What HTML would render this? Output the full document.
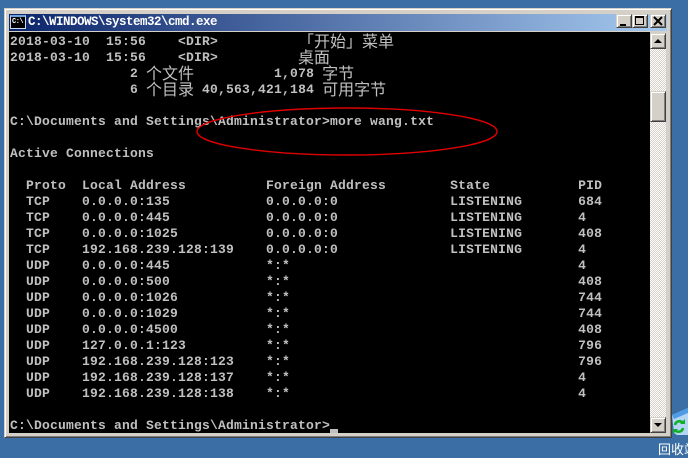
<!DOCTYPE html>
<html><head><meta charset="utf-8">
<style>
html,body{margin:0;padding:0;width:688px;height:455px;overflow:hidden;background:#3a6ea5}
div{position:absolute;box-sizing:border-box}
#win{left:4px;top:8px;width:668px;height:430px;background:#d4d0c8;border:1px solid #d4d0c8;border-right-color:#404040;border-bottom-color:#404040;box-shadow:inset 1px 1px 0 #fff,inset -1px -1px 0 #808080}
#tb{left:9px;top:14px;width:658px;height:17px;background:linear-gradient(90deg,#0a246a,#a6caf0)}
#tt{left:28px;top:14px;font:bold 12.5px/17px "Liberation Mono",monospace;color:#fff;letter-spacing:-.5px;white-space:pre}
#con{left:9px;top:32px;width:641px;height:401px;background:#000;overflow:hidden}
.r{left:1px;height:16px;white-space:pre;font:bold 13px/16px "Liberation Mono",monospace;letter-spacing:.2px;color:#c0c0c0}
.c{font:normal 16px/0 "WenQuanYi Zen Hei","Noto Sans CJK SC",sans-serif;letter-spacing:0;color:#c0c0c0;position:relative;top:1.5px}
.btn{background:#d4d0c8;border:1px solid #d4d0c8;border-right-color:#404040;border-bottom-color:#404040;box-shadow:inset 1px 1px 0 #fff,inset -1px -1px 0 #808080}
#label{left:658px;top:442px;font:13px/14px "WenQuanYi Zen Hei","Noto Sans CJK SC",sans-serif;color:#fff;white-space:pre}
</style></head>
<body>
<div id="win"></div>
<div id="tb"></div>
<div style="left:10px;top:15px;width:16px;height:14px;background:#000;border:1px solid #c8d8f0;border-top:2px solid #6ea0e0"></div>
<div style="left:12px;top:18px;font:bold 7px/8px 'Liberation Mono',monospace;color:#fff;letter-spacing:-.5px;white-space:pre">C:\</div>
<div id="tt">C:\WINDOWS\system32\cmd.exe</div>

<div class="btn" style="left:616px;top:14px;width:16px;height:14px"></div>
<div style="left:620px;top:24px;width:6px;height:2px;background:#000"></div>
<div class="btn" style="left:632px;top:14px;width:16px;height:14px"></div>
<div style="left:635px;top:16px;width:9px;height:9px;border:1px solid #000;border-top-width:2px"></div>
<div class="btn" style="left:650px;top:14px;width:16px;height:14px"></div>
<svg style="position:absolute;left:650px;top:14px" width="16" height="14"><path d="M4 3L12 11M12 3L4 11" stroke="#000" stroke-width="2" fill="none"/></svg>

<div id="con">
<div class="r" style="top:2px">2018-03-10  15:56    &lt;DIR&gt;          <span class="c">「开始」菜单</span></div>
<div class="r" style="top:18px">2018-03-10  15:56    &lt;DIR&gt;          <span class="c">桌面</span></div>
<div class="r" style="top:34px">               2 <span class="c">个文件</span>          1,078 <span class="c">字节</span></div>
<div class="r" style="top:50px">               6 <span class="c">个目录</span> 40,563,421,184 <span class="c">可用字节</span></div>
<div class="r" style="top:82px">C:\Documents and Settings\Administrator&gt;more wang.txt</div>
<div class="r" style="top:114px">Active Connections</div>
<div class="r" style="top:146px">  Proto  Local Address          Foreign Address        State           PID</div>
<div class="r" style="top:162px">  TCP    0.0.0.0:135            0.0.0.0:0              LISTENING       684</div>
<div class="r" style="top:178px">  TCP    0.0.0.0:445            0.0.0.0:0              LISTENING       4</div>
<div class="r" style="top:194px">  TCP    0.0.0.0:1025           0.0.0.0:0              LISTENING       408</div>
<div class="r" style="top:210px">  TCP    192.168.239.128:139    0.0.0.0:0              LISTENING       4</div>
<div class="r" style="top:226px">  UDP    0.0.0.0:445            *:*                                    4</div>
<div class="r" style="top:242px">  UDP    0.0.0.0:500            *:*                                    408</div>
<div class="r" style="top:258px">  UDP    0.0.0.0:1026           *:*                                    744</div>
<div class="r" style="top:274px">  UDP    0.0.0.0:1029           *:*                                    744</div>
<div class="r" style="top:290px">  UDP    0.0.0.0:4500           *:*                                    408</div>
<div class="r" style="top:306px">  UDP    127.0.0.1:123          *:*                                    796</div>
<div class="r" style="top:322px">  UDP    192.168.239.128:123    *:*                                    796</div>
<div class="r" style="top:338px">  UDP    192.168.239.128:137    *:*                                    4</div>
<div class="r" style="top:354px">  UDP    192.168.239.128:138    *:*                                    4</div>
<div class="r" style="top:386px">C:\Documents and Settings\Administrator&gt;</div>
<div style="left:321px;top:397px;width:8px;height:4px;background:#c0c0c0"></div>
</div>

<svg style="position:absolute;left:650px;top:33px" width="16" height="400" shape-rendering="crispEdges"><defs><pattern id="d" width="2" height="2" patternUnits="userSpaceOnUse"><rect width="2" height="2" fill="#fff"/><rect width="1" height="1" fill="#d4d0c8"/><rect x="1" y="1" width="1" height="1" fill="#d4d0c8"/></pattern></defs><rect width="16" height="400" fill="url(#d)"/></svg>
<div class="btn" style="left:650px;top:33px;width:16px;height:16px"></div>
<svg style="position:absolute;left:650px;top:33px" width="16" height="16"><path d="M4 10H12L8 6Z" fill="#000"/></svg>
<div class="btn" style="left:650px;top:91px;width:16px;height:31px"></div>
<div class="btn" style="left:650px;top:417px;width:16px;height:16px"></div>
<svg style="position:absolute;left:650px;top:417px" width="16" height="16"><path d="M4 6H12L8 10Z" fill="#000"/></svg>

<svg style="position:absolute;left:0;top:0" width="688" height="455"><ellipse cx="347" cy="131.5" rx="150" ry="23.5" fill="none" stroke="#e00000" stroke-width="1.4"/></svg>

<svg style="position:absolute;left:672px;top:408px" width="16" height="32"><path d="M0 7L16 0V27H5L2 25Z" fill="#b4d6f4"/><path d="M0 7L16 0V5L2 11Z" fill="#4f9be6"/><path d="M3 17A4.500 4.500 0 0 1 11 15" fill="none" stroke="#12b02a" stroke-width="2.600"/><path d="M11 20A4.500 4.500 0 0 1 3 22" fill="none" stroke="#12b02a" stroke-width="2.600"/><path d="M8 16H13V11Z" fill="#12b02a"/><path d="M6 21H1V26Z" fill="#12b02a"/></svg>
<div id="label">回收站</div>
</body></html>
